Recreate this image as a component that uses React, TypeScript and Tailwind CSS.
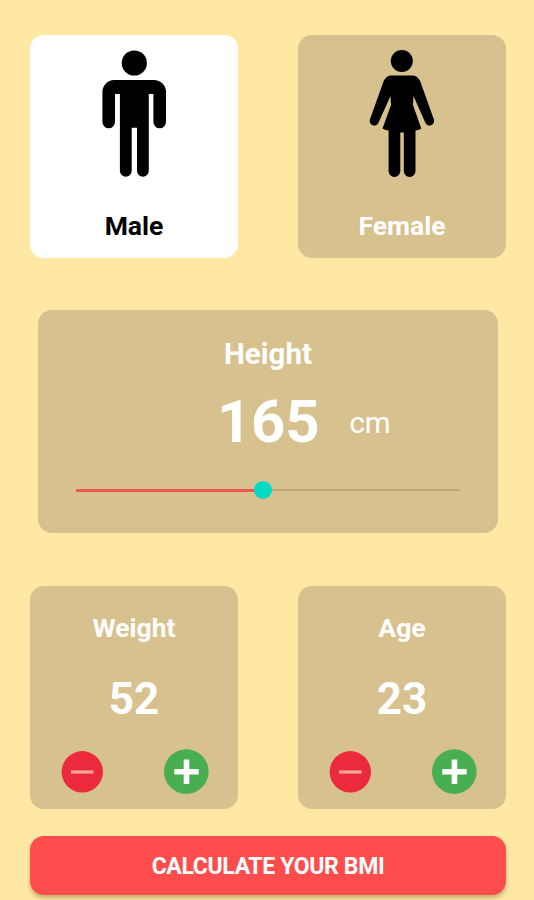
import { useState } from 'react';

interface GenderCardProps {
  label: string;
  selected: boolean;
  onSelect: () => void;
  children: React.ReactNode;
}

interface CounterCardProps {
  label: string;
  value: number;
  onChange: (value: number) => void;
}

const MIN_HEIGHT = 100;
const MAX_HEIGHT = 233.5;

function MaleIcon() {
  return (
    <svg className="w-16 h-32" viewBox="0 0 64 128" fill="currentColor">
      <circle cx="32.3" cy="13" r="12.6" />
      <path d="M12 30H52A12 12 0 0 1 64 42V72A6.3 6.3 0 0 1 51.4 72V44H46.8V120.8A5.9 5.9 0 0 1 35 120.8V77.8H29.7V120.8A5.9 5.9 0 0 1 17.9 120.8V44H13V72A6.3 6.3 0 0 1 .4 72V42A12 12 0 0 1 12 30Z" />
    </svg>
  );
}

function FemaleIcon() {
  return (
    <svg className="w-16 h-32 overflow-visible" viewBox="0 0 64 128" fill="currentColor">
      <circle cx="31.8" cy="11" r="11" />
      <path d="M21.5 25.4H42.3C46.3 25.4 48.8 28 50.3 31.5L63.8 69.2A4.5 4.5 0 0 1 55.2 72.6L43.5 46L43 55L51.3 78.5Q48.5 80.3 45.5 80.6V121.2A5.8 5.8 0 0 1 33.8 121.2V82.6H30.3V121.2A5.8 5.8 0 0 1 18.6 121.2V80.6Q15.5 80.3 12.5 78.5L21 55L20.5 46L8.6 72.6A4.5 4.5 0 0 1 0 69.2L13.5 31.5C15 28 17.5 25.4 21.5 25.4Z" />
    </svg>
  );
}

function GenderCard({ label, selected, onSelect, children }: GenderCardProps) {
  return (
    <button
      onClick={onSelect}
      className={`flex flex-col items-center w-52 h-[223px] pt-[15px] rounded-[14px] ${selected ? 'bg-white' : 'bg-[#d7c18e]'}`}
    >
      <span className="text-black">{children}</span>
      <span className={`mt-[30px] text-[26.5px] leading-9 font-bold ${selected ? 'text-black' : 'text-white'}`}>
        {label}
      </span>
    </button>
  );
}

function CounterCard({ label, value, onChange }: CounterCardProps) {
  return (
    <div className="flex flex-col items-center w-52 h-[223px] pt-6 rounded-[14px] bg-[#d7c18e] text-white">
      <h2 className="text-[26.5px] leading-9 font-bold">{label}</h2>
      <p className="mt-7 text-[44px] leading-[50px] font-bold">{value}</p>
      <div className="flex items-center justify-between w-full mt-[25px] pl-[31px] pr-[29px]">
        <button aria-label={`Decrease ${label}`} onClick={() => onChange(value - 1)}>
          <svg className="w-[42px] h-[42px]" viewBox="0 0 42 42">
            <circle cx="21.3" cy="20.8" r="20.7" fill="#ec2a3d" />
            <path d="M10 21H32.5" stroke="#f4a794" strokeWidth="3.2" />
          </svg>
        </button>
        <button aria-label={`Increase ${label}`} onClick={() => onChange(value + 1)}>
          <svg className="w-[45px] h-[45px]" viewBox="0 0 45 45">
            <circle cx="22.3" cy="22.6" r="22.3" fill="#48ae4f" />
            <path d="M10.3 22.8H34.7M22.5 10.6V35" stroke="#fff" strokeWidth="5.6" />
          </svg>
        </button>
      </div>
    </div>
  );
}

export default function App() {
  const [gender, setGender] = useState('male');
  const [height, setHeight] = useState(165);
  const [weight, setWeight] = useState(52);
  const [age, setAge] = useState(23);

  const percent = ((height - MIN_HEIGHT) / (MAX_HEIGHT - MIN_HEIGHT)) * 100;

  return (
    <main className="h-screen overflow-hidden pt-[35px] pl-[30px] pr-7 bg-[#ffe8a4] font-['Roboto',sans-serif]">
      <section className="flex justify-between">
        <GenderCard label="Male" selected={gender === 'male'} onSelect={() => setGender('male')}>
          <MaleIcon />
        </GenderCard>
        <GenderCard label="Female" selected={gender === 'female'} onSelect={() => setGender('female')}>
          <FemaleIcon />
        </GenderCard>
      </section>

      <section className="w-[460px] h-[223px] mt-[52px] ml-2 pt-6 rounded-[14px] bg-[#d7c18e] text-white">
        <h2 className="text-center text-[29.5px] leading-10 font-bold">Height</h2>
        <div className="flex items-center mt-[13px] pl-[179px]">
          <span className="text-[60px] leading-[70px] tracking-[-0.3px] font-bold">{height}</span>
          <span className="mt-[2px] ml-[30px] text-[29.5px] leading-10">cm</span>
        </div>
        <div className="relative h-5 mt-[23px] mx-[38px]">
          <div className="flex items-center h-full">
            <div className="h-[3px] bg-[#ef5850]" style={{ width: `${percent}%` }} />
            <div className="flex-1 h-[2px] bg-[#bda778]" />
          </div>
          <div
            className="absolute top-[1px] w-[18px] h-[18px] -ml-[9px] rounded-full bg-[#04d9c4]"
            style={{ left: `${percent}%` }}
          />
          <input
            type="range"
            aria-label="Height"
            min={MIN_HEIGHT}
            max={MAX_HEIGHT}
            value={height}
            onChange={(e) => setHeight(Number(e.target.value))}
            className="absolute inset-0 w-full opacity-0 cursor-pointer"
          />
        </div>
      </section>

      <section className="flex justify-between mt-[53px]">
        <CounterCard label="Weight" value={weight} onChange={setWeight} />
        <CounterCard label="Age" value={age} onChange={setAge} />
      </section>

      <button className="w-full h-[59px] mt-[27px] pt-[3px] rounded-[14px] bg-[#ff4c4c] text-[23px] tracking-[-0.35px] font-bold text-white shadow-[0_3px_4px_rgba(90,70,20,0.35)]">
        CALCULATE YOUR BMI
      </button>
    </main>
  );
}
